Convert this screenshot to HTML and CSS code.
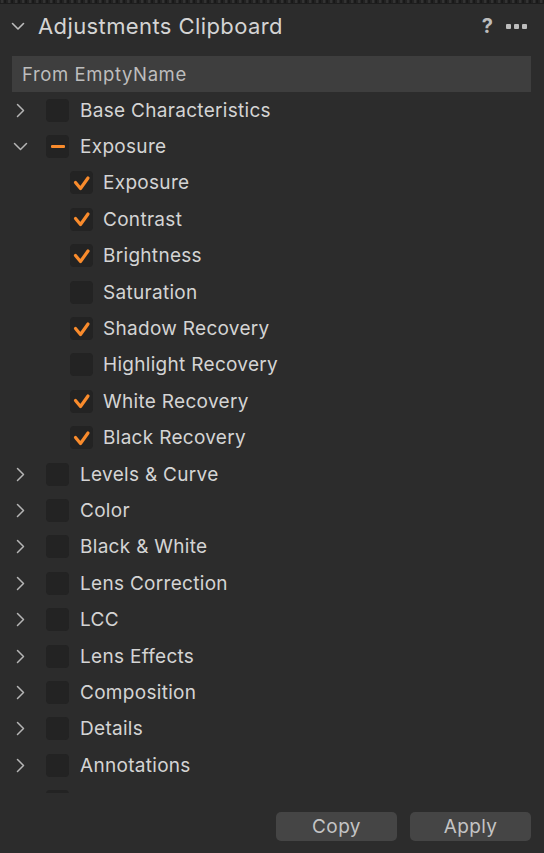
FILE: index.html
```html
<!DOCTYPE html>
<html lang="en">
<head>
    <meta charset="UTF-8">
    <title>Adjustments Clipboard</title>
    <link rel="stylesheet" href="styles.css">
</head>
<body>
    <div class="photo-edge"></div>

    <!-- 面板标题 -->
    <div class="panel-header">
        <svg class="header-chevron" width="14" height="9" viewBox="0 0 14 9"><path d="M1.5 1.5 L7 7 L12.5 1.5" fill="none" stroke="#bdbdbd" stroke-width="1.6" stroke-linecap="round" stroke-linejoin="round"/></svg>
        <div class="panel-title">Adjustments Clipboard</div>
        <div class="header-tools">
            <span class="help">?</span>
            <span class="more"><i></i><i></i><i></i></span>
        </div>
    </div>

    <div class="source-bar">From EmptyName</div>

    <!-- 调整列表 -->
    <div class="tree">
        <div class="row">
            <span class="twisty"><svg width="9" height="15" viewBox="0 0 9 15"><path d="M1.5 1.5 L7.5 7.5 L1.5 13.5" fill="none" stroke="#b5b5b5" stroke-width="1.5" stroke-linecap="round" stroke-linejoin="round"/></svg></span>
            <span class="box"></span>
            <span class="label">Base Characteristics</span>
        </div>
        <div class="row">
            <span class="twisty"><svg width="15" height="9" viewBox="0 0 15 9"><path d="M1.5 1.5 L7.5 7.5 L13.5 1.5" fill="none" stroke="#b5b5b5" stroke-width="1.5" stroke-linecap="round" stroke-linejoin="round"/></svg></span>
            <span class="box mixed"><i></i></span>
            <span class="label">Exposure</span>
        </div>
        <div class="row child">
            <span class="box checked"><svg width="22" height="22" viewBox="0 0 22 22"><path d="M4.5 10.5 L9.5 16.5 L17 6" fill="none" stroke="#f98b2c" stroke-width="3.2" stroke-linecap="round" stroke-linejoin="round"/></svg></span>
            <span class="label">Exposure</span>
        </div>
        <div class="row child">
            <span class="box checked"><svg width="22" height="22" viewBox="0 0 22 22"><path d="M4.5 10.5 L9.5 16.5 L17 6" fill="none" stroke="#f98b2c" stroke-width="3.2" stroke-linecap="round" stroke-linejoin="round"/></svg></span>
            <span class="label">Contrast</span>
        </div>
        <div class="row child">
            <span class="box checked"><svg width="22" height="22" viewBox="0 0 22 22"><path d="M4.5 10.5 L9.5 16.5 L17 6" fill="none" stroke="#f98b2c" stroke-width="3.2" stroke-linecap="round" stroke-linejoin="round"/></svg></span>
            <span class="label">Brightness</span>
        </div>
        <div class="row child">
            <span class="box"></span>
            <span class="label">Saturation</span>
        </div>
        <div class="row child">
            <span class="box checked"><svg width="22" height="22" viewBox="0 0 22 22"><path d="M4.5 10.5 L9.5 16.5 L17 6" fill="none" stroke="#f98b2c" stroke-width="3.2" stroke-linecap="round" stroke-linejoin="round"/></svg></span>
            <span class="label">Shadow Recovery</span>
        </div>
        <div class="row child">
            <span class="box"></span>
            <span class="label">Highlight Recovery</span>
        </div>
        <div class="row child">
            <span class="box checked"><svg width="22" height="22" viewBox="0 0 22 22"><path d="M4.5 10.5 L9.5 16.5 L17 6" fill="none" stroke="#f98b2c" stroke-width="3.2" stroke-linecap="round" stroke-linejoin="round"/></svg></span>
            <span class="label">White Recovery</span>
        </div>
        <div class="row child">
            <span class="box checked"><svg width="22" height="22" viewBox="0 0 22 22"><path d="M4.5 10.5 L9.5 16.5 L17 6" fill="none" stroke="#f98b2c" stroke-width="3.2" stroke-linecap="round" stroke-linejoin="round"/></svg></span>
            <span class="label">Black Recovery</span>
        </div>
        <div class="row">
            <span class="twisty"><svg width="9" height="15" viewBox="0 0 9 15"><path d="M1.5 1.5 L7.5 7.5 L1.5 13.5" fill="none" stroke="#b5b5b5" stroke-width="1.5" stroke-linecap="round" stroke-linejoin="round"/></svg></span>
            <span class="box"></span>
            <span class="label">Levels &amp; Curve</span>
        </div>
        <div class="row">
            <span class="twisty"><svg width="9" height="15" viewBox="0 0 9 15"><path d="M1.5 1.5 L7.5 7.5 L1.5 13.5" fill="none" stroke="#b5b5b5" stroke-width="1.5" stroke-linecap="round" stroke-linejoin="round"/></svg></span>
            <span class="box"></span>
            <span class="label">Color</span>
        </div>
        <div class="row">
            <span class="twisty"><svg width="9" height="15" viewBox="0 0 9 15"><path d="M1.5 1.5 L7.5 7.5 L1.5 13.5" fill="none" stroke="#b5b5b5" stroke-width="1.5" stroke-linecap="round" stroke-linejoin="round"/></svg></span>
            <span class="box"></span>
            <span class="label">Black &amp; White</span>
        </div>
        <div class="row">
            <span class="twisty"><svg width="9" height="15" viewBox="0 0 9 15"><path d="M1.5 1.5 L7.5 7.5 L1.5 13.5" fill="none" stroke="#b5b5b5" stroke-width="1.5" stroke-linecap="round" stroke-linejoin="round"/></svg></span>
            <span class="box"></span>
            <span class="label">Lens Correction</span>
        </div>
        <div class="row">
            <span class="twisty"><svg width="9" height="15" viewBox="0 0 9 15"><path d="M1.5 1.5 L7.5 7.5 L1.5 13.5" fill="none" stroke="#b5b5b5" stroke-width="1.5" stroke-linecap="round" stroke-linejoin="round"/></svg></span>
            <span class="box"></span>
            <span class="label">LCC</span>
        </div>
        <div class="row">
            <span class="twisty"><svg width="9" height="15" viewBox="0 0 9 15"><path d="M1.5 1.5 L7.5 7.5 L1.5 13.5" fill="none" stroke="#b5b5b5" stroke-width="1.5" stroke-linecap="round" stroke-linejoin="round"/></svg></span>
            <span class="box"></span>
            <span class="label">Lens Effects</span>
        </div>
        <div class="row">
            <span class="twisty"><svg width="9" height="15" viewBox="0 0 9 15"><path d="M1.5 1.5 L7.5 7.5 L1.5 13.5" fill="none" stroke="#b5b5b5" stroke-width="1.5" stroke-linecap="round" stroke-linejoin="round"/></svg></span>
            <span class="box"></span>
            <span class="label">Composition</span>
        </div>
        <div class="row">
            <span class="twisty"><svg width="9" height="15" viewBox="0 0 9 15"><path d="M1.5 1.5 L7.5 7.5 L1.5 13.5" fill="none" stroke="#b5b5b5" stroke-width="1.5" stroke-linecap="round" stroke-linejoin="round"/></svg></span>
            <span class="box"></span>
            <span class="label">Details</span>
        </div>
        <div class="row">
            <span class="twisty"><svg width="9" height="15" viewBox="0 0 9 15"><path d="M1.5 1.5 L7.5 7.5 L1.5 13.5" fill="none" stroke="#b5b5b5" stroke-width="1.5" stroke-linecap="round" stroke-linejoin="round"/></svg></span>
            <span class="box"></span>
            <span class="label">Annotations</span>
        </div>
        <div class="row">
            <span class="twisty"><svg width="9" height="15" viewBox="0 0 9 15"><path d="M1.5 1.5 L7.5 7.5 L1.5 13.5" fill="none" stroke="#b5b5b5" stroke-width="1.5" stroke-linecap="round" stroke-linejoin="round"/></svg></span>
            <span class="box"></span>
            <span class="label">Metadata</span>
        </div>
    </div>

    <!-- 底部按钮 -->
    <div class="actions">
        <button class="btn">Copy</button>
        <button class="btn">Apply</button>
    </div>
</body>
</html>
```

FILE: styles.css
```css
/* 全局样式 */
body {
    margin: 0;
    width: 544px;
    height: 853px;
    overflow: hidden;
    background-color: #2c2c2c;
    font-family: Inter, 'Liberation Sans', sans-serif;
    color: #d2d2d2;
}

/* 顶部露出的照片边缘 */
.photo-edge {
    height: 3px;
    background: repeating-linear-gradient(90deg, #1b1b1b 0, #3a3a3a 2px, #141414 5px, #262626 7px);
    border-bottom: 1px solid #1d1d1d;
}

/* 标题栏 */
.panel-header {
    display: flex;
    align-items: center;
    height: 44px;
    padding: 0 17px 0 11px;
}

.header-chevron {
    margin-right: 13px;
    margin-top: 1px;
}

.panel-title {
    flex: 1;
    font-size: 22px;
    letter-spacing: 0.4px;
    color: #d4d4d4;
}

.header-tools {
    display: flex;
    align-items: center;
    gap: 13px;
}

.help {
    font-size: 20px;
    font-weight: 700;
    color: #bdbdbd;
}

.more {
    display: flex;
    gap: 3px;
}

.more i {
    width: 5px;
    height: 5px;
    border-radius: 1px;
    background-color: #bdbdbd;
}

/* 来源栏 */
.source-bar {
    margin: 8px 13px 0 12px;
    height: 36px;
    display: flex;
    align-items: center;
    padding-left: 10px;
    background-color: #3e3e3e;
    font-size: 18.5px;
    letter-spacing: 0.6px;
    color: #bdbdbd;
}

/* 树形列表 */
.tree {
    height: 701px;
    overflow: hidden;
}

.row {
    height: 36.4px;
    display: flex;
    align-items: center;
    font-size: 19px;
    letter-spacing: 0.3px;
}

.twisty {
    width: 46px;
    display: flex;
    justify-content: center;
    padding-right: 5px;
    box-sizing: border-box;
}

.row.child {
    padding-left: 70px;
}

.box {
    width: 23px;
    height: 23px;
    border-radius: 4px;
    background-color: #232323;
    display: flex;
    align-items: center;
    justify-content: center;
    flex-shrink: 0;
}

.box.mixed i {
    width: 14px;
    height: 3px;
    border-radius: 1px;
    background-color: #f98b2c;
}

.label {
    margin-left: 11px;
    color: #d4d4d4;
}

.row.child .label {
    margin-left: 10px;
}

/* 按钮 */
.actions {
    display: flex;
    justify-content: flex-end;
    gap: 13px;
    padding: 19px 13px 0 0;
}

.btn {
    width: 121px;
    height: 29px;
    border: none;
    border-radius: 5px;
    background-color: #454545;
    color: #c4c4c4;
    font-family: Inter, 'Liberation Sans', sans-serif;
    font-size: 19px;
    letter-spacing: 0.4px;
    padding: 0;
}
```
